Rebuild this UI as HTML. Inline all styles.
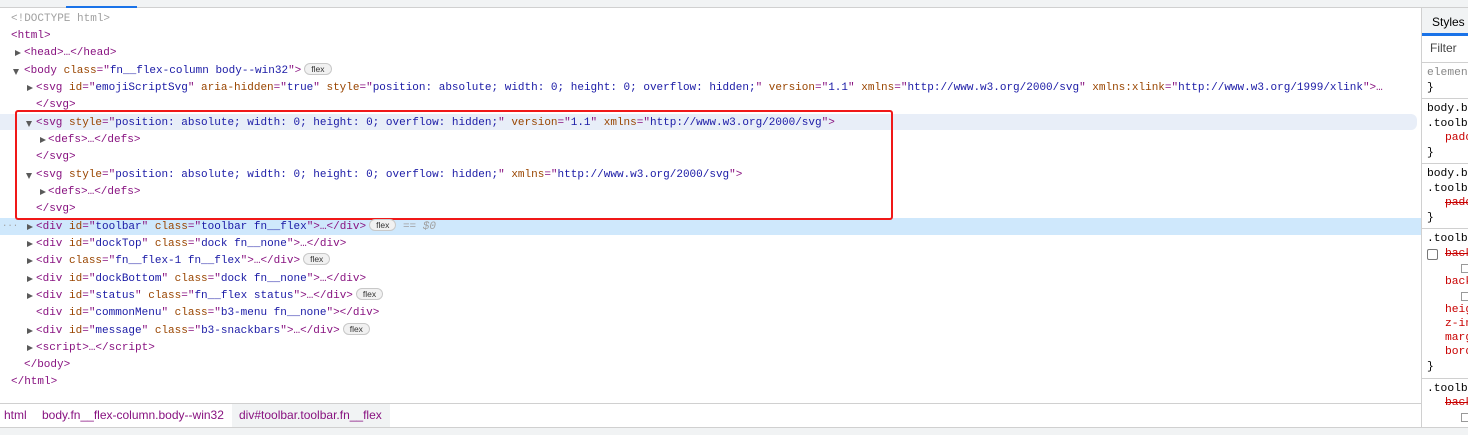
<!DOCTYPE html>
<html><head><style>
*{margin:0;padding:0;box-sizing:border-box}
body{width:1468px;height:435px;overflow:hidden;background:#fff;font-family:"Liberation Mono",monospace;font-size:11px;position:relative}
.top{position:absolute;left:0;top:0;width:1468px;height:8px;background:#f1f3f4;border-bottom:1px solid #d0d0d0}
.tabu{position:absolute;left:66px;top:6px;width:71px;height:2px;background:#1a73e8}
.r{position:absolute;height:17.3px;line-height:17.3px;white-space:pre;color:#881280;margin-top:1px}
.a{color:#994500}.v{color:#1a1aa6}.g{color:#a0a0a0}
.tr{position:absolute;width:0;height:0;border-left:6px solid #5a5a5a;border-top:3.5px solid transparent;border-bottom:3.5px solid transparent;margin-top:6px}
.td{position:absolute;width:0;height:0;border-top:6px solid #5a5a5a;border-left:3.5px solid transparent;border-right:3.5px solid transparent;margin-top:7px}
.badge{display:inline-block;font-size:8.5px;line-height:11px;height:12px;padding:0 6px;border:1px solid #c8c8c8;border-radius:7px;background:#f1f1f1;color:#333;vertical-align:1px;margin-left:3px;font-family:"Liberation Sans",sans-serif}
.hov{position:absolute;left:0;top:114px;width:1417px;height:16px;background:#e8eef8;border-radius:0 6px 6px 0}
.sel{position:absolute;left:0;top:218px;width:1421px;height:17px;background:#cfe8fc}
.box{position:absolute;left:15px;top:110px;width:878px;height:110px;border:2px solid #f01818;border-radius:3px}
.crumb{position:absolute;left:0;top:403px;width:1421px;height:24px;border-top:1px solid #d0d0d0;font-family:"Liberation Sans",sans-serif;font-size:12px;line-height:23px}
.crumb span{position:absolute;top:0}
.bot{position:absolute;left:0;top:427px;width:1468px;height:8px;background:#f1f3f4;border-top:1px solid #d0d0d0}
.side{position:absolute;left:1421px;top:8px;width:47px;height:419px;border-left:1px solid #d0d0d0;background:#fff;overflow:hidden}
.side .s{position:absolute;left:5px;white-space:pre;font-size:11.3px;line-height:13px}
.hr{position:absolute;left:0;width:47px;height:1px;background:#d0d0d0}
</style></head><body>
<div class="top"></div><div class="tabu"></div>
<div class="hov"></div><div class="sel"></div>
<div class="r g" style="left:11px;top:10px">&lt;!DOCTYPE html&gt;</div>
<div class="r" style="left:11px;top:27px">&lt;html&gt;</div>
<div class="tr" style="left:15px;top:44px"></div><div class="r" style="left:24px;top:44px">&lt;head&gt;…&lt;/head&gt;</div>
<div class="td" style="left:13px;top:62px"></div><div class="r" style="left:24px;top:62px">&lt;body <span class="a">class</span>="<span class="v">fn__flex-column body--win32</span>"&gt;<span class="badge">flex</span></div>
<div class="tr" style="left:27px;top:79px"></div><div class="r" style="left:36px;top:79px">&lt;svg <span class="a">id</span>="<span class="v">emojiScriptSvg</span>" <span class="a">aria-hidden</span>="<span class="v">true</span>" <span class="a">style</span>="<span class="v">position: absolute; width: 0; height: 0; overflow: hidden;</span>" <span class="a">version</span>="<span class="v">1.1</span>" <span class="a">xmlns</span>="<span class="v">http://www.w3.org/2000/svg</span>" <span class="a">xmlns:xlink</span>="<span class="v">http://www.w3.org/1999/xlink</span>"&gt;…</div>
<div class="r" style="left:36px;top:96px">&lt;/svg&gt;</div>
<div class="td" style="left:26px;top:114px"></div><div class="r" style="left:36px;top:114px">&lt;svg <span class="a">style</span>="<span class="v">position: absolute; width: 0; height: 0; overflow: hidden;</span>" <span class="a">version</span>="<span class="v">1.1</span>" <span class="a">xmlns</span>="<span class="v">http://www.w3.org/2000/svg</span>"&gt;</div>
<div class="tr" style="left:40px;top:131px"></div><div class="r" style="left:48px;top:131px">&lt;defs&gt;…&lt;/defs&gt;</div>
<div class="r" style="left:36px;top:148px">&lt;/svg&gt;</div>
<div class="td" style="left:26px;top:166px"></div><div class="r" style="left:36px;top:166px">&lt;svg <span class="a">style</span>="<span class="v">position: absolute; width: 0; height: 0; overflow: hidden;</span>" <span class="a">xmlns</span>="<span class="v">http://www.w3.org/2000/svg</span>"&gt;</div>
<div class="tr" style="left:40px;top:183px"></div><div class="r" style="left:48px;top:183px">&lt;defs&gt;…&lt;/defs&gt;</div>
<div class="r" style="left:36px;top:200px">&lt;/svg&gt;</div>
<div class="box"></div>
<div class="r g" style="left:2px;top:217px;font-size:9px">···</div>
<div class="tr" style="left:27px;top:218px"></div><div class="r" style="left:36px;top:218px">&lt;div <span class="a">id</span>="<span class="v">toolbar</span>" <span class="a">class</span>="<span class="v">toolbar fn__flex</span>"&gt;…&lt;/div&gt;<span class="badge">flex</span> <span class="g"><i>== $0</i></span></div>
<div class="tr" style="left:27px;top:235px"></div><div class="r" style="left:36px;top:235px">&lt;div <span class="a">id</span>="<span class="v">dockTop</span>" <span class="a">class</span>="<span class="v">dock fn__none</span>"&gt;…&lt;/div&gt;</div>
<div class="tr" style="left:27px;top:252px"></div><div class="r" style="left:36px;top:252px">&lt;div <span class="a">class</span>="<span class="v">fn__flex-1 fn__flex</span>"&gt;…&lt;/div&gt;<span class="badge">flex</span></div>
<div class="tr" style="left:27px;top:270px"></div><div class="r" style="left:36px;top:270px">&lt;div <span class="a">id</span>="<span class="v">dockBottom</span>" <span class="a">class</span>="<span class="v">dock fn__none</span>"&gt;…&lt;/div&gt;</div>
<div class="tr" style="left:27px;top:287px"></div><div class="r" style="left:36px;top:287px">&lt;div <span class="a">id</span>="<span class="v">status</span>" <span class="a">class</span>="<span class="v">fn__flex status</span>"&gt;…&lt;/div&gt;<span class="badge">flex</span></div>
<div class="r" style="left:36px;top:304px">&lt;div <span class="a">id</span>="<span class="v">commonMenu</span>" <span class="a">class</span>="<span class="v">b3-menu fn__none</span>"&gt;&lt;/div&gt;</div>
<div class="tr" style="left:27px;top:322px"></div><div class="r" style="left:36px;top:322px">&lt;div <span class="a">id</span>="<span class="v">message</span>" <span class="a">class</span>="<span class="v">b3-snackbars</span>"&gt;…&lt;/div&gt;<span class="badge">flex</span></div>
<div class="tr" style="left:27px;top:339px"></div><div class="r" style="left:36px;top:339px">&lt;script&gt;…&lt;/script&gt;</div>
<div class="r" style="left:24px;top:356px">&lt;/body&gt;</div>
<div class="r" style="left:11px;top:373px">&lt;/html&gt;</div>
<div class="crumb">
<span style="left:4px;color:#881280">html</span>
<span style="left:42px;color:#881280">body.fn__flex-column.body--win32</span>
<span style="left:232px;width:158px;height:23px;background:#f1f3f4;padding-left:7px;color:#881280">div#toolbar.toolbar.fn__flex</span>
</div>
<div class="bot"></div>
<div class="side">
<div style="position:absolute;left:0;top:0;width:47px;height:28px;background:#f1f3f4"></div>
<div class="s" style="left:10px;top:8px;font-family:'Liberation Sans',sans-serif;font-size:12px">Styles</div>
<div style="position:absolute;left:0;top:25px;width:47px;height:3px;background:#1a73e8"></div>
<div class="s" style="left:8px;top:34px;font-family:'Liberation Sans',sans-serif;font-size:12px;color:#444">Filter</div>
<div class="hr" style="top:54px"></div>
<div class="s" style="top:59px;color:#888">element</div>
<div class="s" style="top:74px">}</div>
<div class="hr" style="top:90px"></div>
<div class="s" style="top:95px">body.bo</div>
<div class="s" style="top:110px">.toolba</div>
<div class="s" style="left:23px;top:124px;color:#c80000">padd</div>
<div class="s" style="top:139px">}</div>
<div class="hr" style="top:155px"></div>
<div class="s" style="top:160px">body.bo</div>
<div class="s" style="top:175px">.toolba</div>
<div class="s" style="left:23px;top:189px;color:#c80000;text-decoration:line-through">padd</div>
<div class="s" style="top:204px">}</div>
<div class="hr" style="top:220px"></div>
<div class="s" style="top:225px">.toolba</div>
<div style="position:absolute;left:5px;top:241px;width:11px;height:11px;border:1px solid #777;border-radius:2px"></div>
<div class="s" style="left:23px;top:240px;color:#c80000;text-decoration:line-through">back</div>
<div style="position:absolute;left:39px;top:256px;width:8px;height:9px;border:1px solid #999"></div>
<div class="s" style="left:23px;top:268px;color:#c80000">back</div>
<div style="position:absolute;left:39px;top:284px;width:8px;height:9px;border:1px solid #999"></div>
<div class="s" style="left:23px;top:296px;color:#c80000">heig</div>
<div class="s" style="left:23px;top:310px;color:#c80000">z-in</div>
<div class="s" style="left:23px;top:324px;color:#c80000">marg</div>
<div class="s" style="left:23px;top:338px;color:#c80000">bord</div>
<div class="s" style="top:353px">}</div>
<div class="hr" style="top:370px"></div>
<div class="s" style="top:375px">.toolba</div>
<div class="s" style="left:23px;top:389px;color:#c80000;text-decoration:line-through">back</div>
<div style="position:absolute;left:39px;top:405px;width:8px;height:9px;border:1px solid #999"></div>
</div>
</body></html>
